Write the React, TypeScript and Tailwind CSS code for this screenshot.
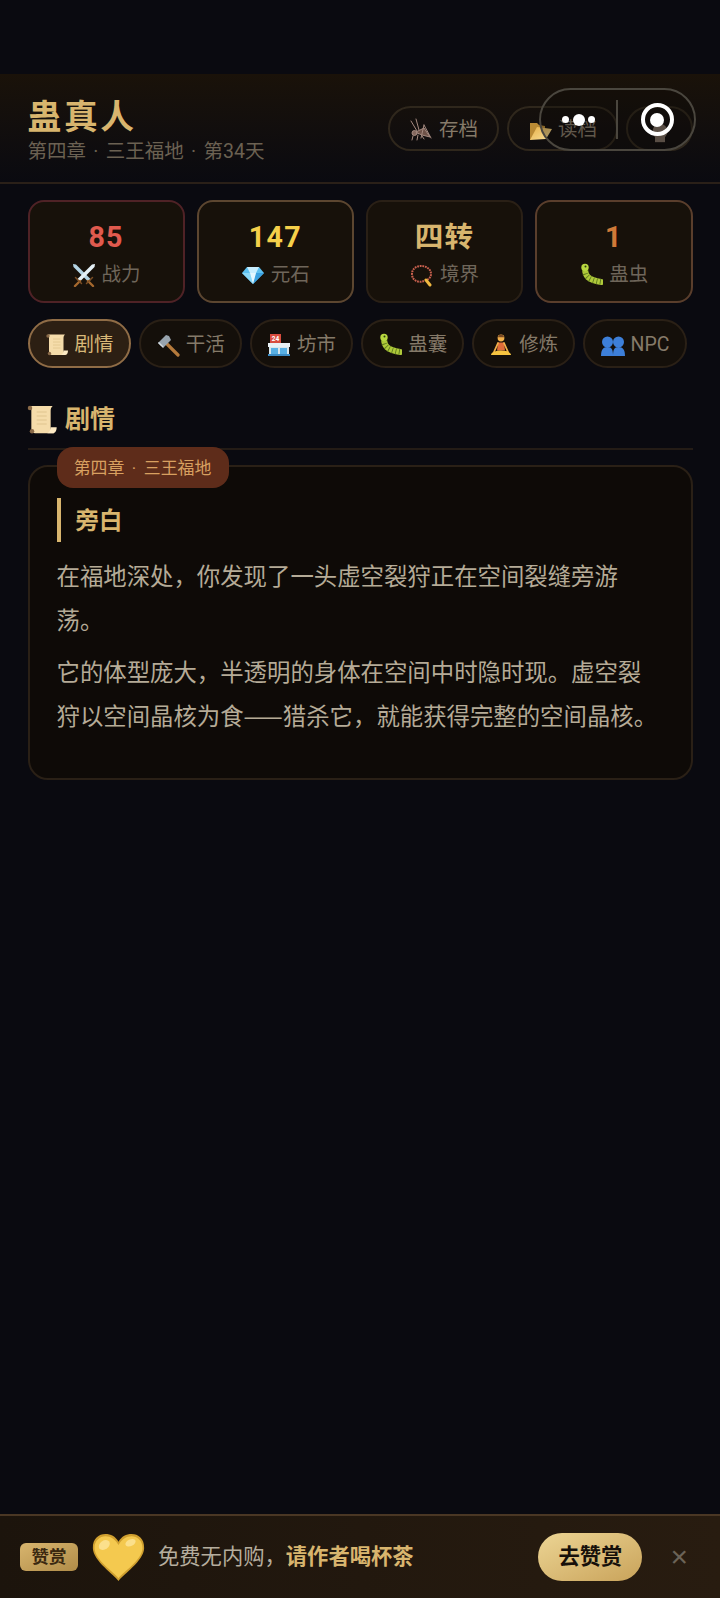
import type { ReactNode } from "react";

const FONT = "font-['Roboto','Noto_Sans_CJK_SC',sans-serif]";

const Swords = () => (
  <svg viewBox="0 0 24 24" className="h-6 w-6 shrink-0">
    <path d="M1 1l3 .5 15 15-2.500 2.500L1.500 4z" fill="#b4d4e4" />
    <path d="M23 1l-3 .5-15 15 2.500 2.500L22.500 4z" fill="#e4f0f6" />
    <path d="M16 18l5 5M8 18l-5 5" stroke="#a5682e" strokeWidth="2.400" strokeLinecap="round" />
    <path d="M14.500 20.500l6-6M9.500 20.500l-6-6" stroke="#7c4e24" strokeWidth="1.500" strokeLinecap="round" />
  </svg>
);

const Gem = () => (
  <svg viewBox="0 0 24 24" className="h-6 w-6 shrink-0">
    <path d="M6 4h12l5 6-11 11L1 10z" fill="#5cc0f0" />
    <path d="M6 4h12l-3 6H9z" fill="#c8eeff" />
    <path d="M1 10h8l3 11z" fill="#8ad8f8" />
    <path d="M23 10h-8l-3 11z" fill="#3aa0e0" />
    <path d="M9 10h6l-3 11z" fill="#e4f7ff" />
  </svg>
);

const Beads = () => (
  <svg viewBox="0 0 24 24" className="h-6 w-6 shrink-0" fill="none">
    <path d="M14 18c-5 2-12 0-12-7 0-5 4-8 9-8s10 3 10 8c0 3-2 5-4 6" stroke="#c8604e" strokeWidth="2" strokeDasharray="1.800 0.800" />
    <path d="M16 17l4 5" stroke="#f0b840" strokeWidth="3" strokeLinecap="round" />
  </svg>
);

const Worm = () => (
  <svg viewBox="0 0 24 24" className="h-6 w-6 shrink-0" fill="none">
    <path d="M6 5c0 8 3 12 16 14" stroke="#afc93a" strokeWidth="6" strokeLinecap="round" />
    <path d="M6 7c0 6 3 10 16 12" stroke="#5f7a1e" strokeWidth="6" strokeDasharray="0.900 2.600" />
    <circle cx="6" cy="4.500" r="3.700" fill="#b8d840" />
    <circle cx="6.500" cy="3.600" r="1" fill="#2c3a10" />
  </svg>
);

const Scroll = ({ size = "h-6 w-6" }: { size?: string }) => (
  <svg viewBox="0 0 24 24" className={`${size} shrink-0`}>
    <path d="M3 1.500h17c-1 1-1.500 2-1.500 3.500v13c0 2 1 3.500 2.500 4H7c-2 0-3-1.500-3-3.500V5C4 3.500 4 2.500 3 1.500z" fill="#f5dcaa" />
    <path d="M8 6h7.500M8 9h7.500M8 12h7.500M8 15h7.500" stroke="#e0c48e" strokeWidth="0.800" />
    <circle cx="3" cy="3" r="1.700" fill="#8a6a48" />
    <circle cx="4.500" cy="20.500" r="1.700" fill="#8a6a48" />
    <path d="M18.500 17.500H23c0 2.500-1 4.500-3 4.500h-4c1.500-1 2.500-2 2.500-4.500z" fill="#fdeac4" />
  </svg>
);

const Hammer = () => (
  <svg viewBox="0 0 24 24" className="h-6 w-6 shrink-0">
    <path d="M10 10l12 12" stroke="#b57a3c" strokeWidth="3.200" strokeLinecap="round" />
    <path d="M2 10l8-8 3 1 2 4-7 7-3-1z" fill="#98a4ae" />
    <path d="M2 10l5 5 1-1-5-5z" fill="#d2dae0" />
  </svg>
);

const Store = () => (
  <svg viewBox="0 0 24 24" className="h-6 w-6 shrink-0">
    <rect x="3" y="1" width="11" height="9" fill="#d84c3e" />
    <text x="8.500" y="8" fontSize="6.500" fontWeight="700" textAnchor="middle" fill="#fff" fontFamily="Roboto">24</text>
    <rect x="1" y="10" width="22" height="4" fill="#e8f0f4" />
    <rect x="2" y="14" width="20" height="8" fill="#d8e6ec" />
    <rect x="4" y="15" width="7" height="6" fill="#58b0e4" />
    <rect x="13" y="15" width="7" height="6" fill="#58b0e4" />
    <rect x="1" y="21" width="22" height="2" fill="#3c8cc4" />
  </svg>
);

const Meditate = () => (
  <svg viewBox="0 0 24 24" className="h-6 w-6 shrink-0">
    <circle cx="12" cy="5" r="3.400" fill="#f2b04a" />
    <path d="M12 1.600a3.400 3.400 0 0 1 3.300 2.600H8.700A3.400 3.400 0 0 1 12 1.600z" fill="#7a4a24" />
    <path d="M9 9.500h6l1 8H8z" fill="#e06c3a" />
    <path d="M9 10L5 19M15 10l4 9" stroke="#f2b04a" strokeWidth="1.800" strokeLinecap="round" />
    <path d="M2 22c0-3 5-4.500 10-4.500S22 19 22 22z" fill="#f6c440" />
  </svg>
);

const People = () => (
  <svg viewBox="0 0 24 24" className="h-6 w-6 shrink-0" fill="#3d7fd9">
    <circle cx="6.500" cy="9" r="5.500" />
    <circle cx="17.500" cy="9" r="5.500" />
    <path d="M0 23c0-6 2-9 6.500-9s5.500 3 5.500 9z" />
    <path d="M12 23c0-6 1-9 5.500-9s6.500 3 6.500 9z" />
  </svg>
);

const Cricket = () => (
  <svg viewBox="0 0 24 24" className="h-6 w-6 shrink-0" fill="none" stroke="#a58a80" strokeWidth="1" strokeLinecap="round">
    <path d="M2 3l6 10M7 1l3 11" />
    <path d="M7 14l8-4 6 9-8-2z" fill="#6e5248" />
    <circle cx="5.500" cy="15" r="2.500" fill="#84685e" />
    <path d="M15 7l7 13M15 7l-3 13M4 18l-1 4M9 17l-1 5M13 18l2 3" />
  </svg>
);

const Folder = () => (
  <svg viewBox="0 0 24 24" className="h-6 w-6 shrink-0">
    <defs>
      <linearGradient id="folderFill" x1="0" y1="0" x2="1" y2="1">
        <stop offset="0" stopColor="#e8b24a" />
        <stop offset="1" stopColor="#f8e09a" />
      </linearGradient>
    </defs>
    <path d="M2 5h7l2 2 6 1v5H8L3 22H2z" fill="#b98a34" />
    <path d="M9 9l15 2-6 10-16 1z" fill="url(#folderFill)" />
  </svg>
);

const Heart = () => (
  <svg viewBox="0 0 48 44" className="h-12 w-[53px] shrink-0">
    <path d="M24 44C20 38 1 26 0.500 14 0.200 5 6 1 12 1c5 0 9 2 12 7 3-5 7-7 12-7 6 0 11.800 4 11.500 13C47 26 28 38 24 44z" fill="#cf9f2f" />
    <path d="M24 41.500C20 36 2.500 25 2 14 1.800 7 7 3 12 3c5 0 9 3 12 8 3-5 7-8 12-8 5 0 10.200 4 10 11-.5 11-18 22-22 27.500z" fill="#f4c94f" />
    <ellipse cx="11" cy="11" rx="5.500" ry="4" transform="rotate(-35 11 11)" fill="#fbe08c" />
    <ellipse cx="35" cy="9" rx="5" ry="3" transform="rotate(-25 35 9)" fill="#fbe08c" />
  </svg>
);

function HeaderButton({ icon, label }: { icon: ReactNode; label?: string }) {
  return (
    <div className={`flex h-[45px] items-center justify-center gap-1.5 rounded-full border-2 border-[#2f271c] pt-1 ${label ? "w-[111px]" : "w-[67px]"}`}>
      {icon}
      {label && <span className="text-[19.500px] text-[#857a69]">{label}</span>}
    </div>
  );
}

function Stat({ value, label, icon, valueClass, borderClass }: { value: string; label: string; icon: ReactNode; valueClass: string; borderClass: string }) {
  return (
    <div className={`flex h-[103px] flex-col items-center rounded-2xl border-2 bg-[#17110a] pt-[16px] ${borderClass}`}>
      <div className={`text-[28.600px] leading-[38px] font-bold tracking-[1.300px] ${valueClass}`}>{value}</div>
      <div className="mt-[5px] flex items-center gap-1.5 text-[19.500px] leading-7 text-[#6f665a]">
        {icon}
        <span>{label}</span>
      </div>
    </div>
  );
}

function Tab({ icon, label, active }: { icon: ReactNode; label: string; active?: boolean }) {
  return (
    <div
      className={`flex h-[49px] w-[103.200px] shrink-0 items-center justify-center gap-1.5 rounded-full border-2 pt-0.5 text-[19.500px] ${
        active ? "border-[#8f6c46] bg-[#2c1f13] text-[#d8b878]" : "border-[#2a2016] bg-[#140f0a] text-[#857a69]"
      }`}
    >
      {icon}
      <span>{label}</span>
    </div>
  );
}

export default function App() {
  return (
    <div className={`relative flex h-[1598px] w-[720px] flex-col overflow-hidden bg-[#0a0a10] ${FONT}`}>
      <div className="h-[74px] shrink-0" />

      {/* header */}
      <div className="flex h-[110px] shrink-0 items-center justify-between border-b-2 border-[#2a2018] bg-gradient-to-b from-[#1a1209] to-[#0a0a10] pl-[27.500px] pr-[27px]">
        <div className="pt-[6px]">
          <h1 className="text-[33.800px] leading-[42px] font-bold tracking-[2.600px] text-[#d8b56e]">蛊真人</h1>
          <p className="text-[19.500px] leading-[26px] text-[#6b6152] [word-spacing:2.500px]">第四章 · 三王福地 · 第34天</p>
        </div>
        <div className="flex gap-2">
          <HeaderButton icon={<Cricket />} label="存档" />
          <HeaderButton icon={<Folder />} label="读档" />
          <HeaderButton
            icon={
              <svg viewBox="0 0 24 24" className="mt-[5px] h-5 w-5" fill="#7a6c60">
                <circle cx="12" cy="10" r="9" />
                <rect x="6" y="16" width="12" height="7" />
              </svg>
            }
          />
        </div>
      </div>

      {/* stats */}
      <div className="mx-[27.500px] mt-4 grid grid-cols-4 gap-3">
        <Stat value="85" label="战力" icon={<Swords />} valueClass="text-[#e05a4e]" borderClass="border-[#4f2226]" />
        <Stat value="147" label="元石" icon={<Gem />} valueClass="text-[#f5d04a]" borderClass="border-[#5c4630]" />
        <Stat value="四转" label="境界" icon={<Beads />} valueClass="text-[#d8b56e]" borderClass="border-[#2a2016]" />
        <Stat value="1" label="蛊虫" icon={<Worm />} valueClass="text-[#d07a38]" borderClass="border-[#5a3e2c]" />
      </div>

      {/* tabs */}
      <div className="ml-[27.500px] mt-4 flex gap-2">
        <Tab icon={<Scroll />} label="剧情" active />
        <Tab icon={<Hammer />} label="干活" />
        <Tab icon={<Store />} label="坊市" />
        <Tab icon={<Worm />} label="蛊囊" />
        <Tab icon={<Meditate />} label="修炼" />
        <Tab icon={<People />} label="NPC" />
      </div>

      {/* section title */}
      <div className="mx-[27.500px] mt-[31px] flex h-[51px] items-start gap-[7.500px] border-b-2 border-[#241c16] text-[25px] leading-[42px] font-bold text-[#d8b56e]">
        <Scroll size="h-8 w-8 mt-[5px] -ml-[2px]" />
        <span>剧情</span>
      </div>

      {/* story card */}
      <div className="relative mx-[27.500px] mt-[15px] h-[315px] rounded-[20px] border-2 border-[#2a2016] bg-[#0e0a07] px-[27px] pt-[31px]">
        <div className="absolute top-[-20px] left-[27px] flex h-[41px] w-[172px] items-center justify-center rounded-2xl bg-[#5e2c1a] pt-0.5 text-[16.900px] text-[#d8a060] [word-spacing:3.300px]">
          第四章 · 三王福地
        </div>
        <div className="flex h-11 items-center border-l-4 border-[#d8b56e] pl-[15px] pt-1 text-[23.400px] font-bold text-[#d8b56e]">旁白</div>
        <p className="mt-[11px] font-['Noto_Sans_CJK_SC',sans-serif] text-[23.400px] leading-[44px] text-[#b5ab97]">在福地深处，你发现了一头虚空裂狩正在空间裂缝旁游荡。</p>
        <p className="mt-2 font-['Noto_Sans_CJK_SC',sans-serif] text-[23.400px] leading-[44px] text-[#b5ab97]">它的体型庞大，半透明的身体在空间中时隐时现。虚空裂狩以空间晶核为食——猎杀它，就能获得完整的空间晶核。</p>
      </div>

      {/* reward banner */}
      <div className="mt-auto flex h-[84px] shrink-0 items-center border-t-2 border-[#4a3724] bg-gradient-to-r from-[#1c140c] to-[#281c10] pl-5 pr-8">
        <div className="flex h-7 w-[58px] items-center justify-center rounded-md bg-gradient-to-br from-[#d8b56e] to-[#b08c48] text-[17.500px] font-bold text-[#3a2810]">赞赏</div>
        <div className="ml-[14px]"><Heart /></div>
        <div className="ml-[13px] flex-1 text-[21.300px] text-[#b5ad9e]">
          免费无内购，<b className="font-bold text-[#d8b56e]">请作者喝杯茶</b>
        </div>
        <div className="flex h-12 w-[104px] items-center justify-center rounded-full bg-gradient-to-br from-[#ecd594] to-[#c9a35a] text-[21.300px] font-bold text-[#16100a]">去赞赏</div>
        <div className="ml-7 text-[30px] leading-none text-[#6b6357] font-['Liberation_Sans',sans-serif]">×</div>
      </div>

      {/* mini-program capsule */}
      <div className="absolute top-[88px] left-[539px] flex h-[63px] w-[157px] items-center rounded-full border-2 border-[#4a463e] bg-[#0c0a08]/30">
        <div className="flex w-[75px] items-center justify-center gap-[3.500px]">
          <span className="h-[7px] w-[7px] rounded-full bg-white" />
          <span className="h-3 w-3 rounded-full bg-white" />
          <span className="h-[7px] w-[7px] rounded-full bg-white" />
        </div>
        <div className="h-[39px] w-0.5 bg-[#4a463e]" />
        <div className="flex flex-1 items-center justify-center pl-0.5">
          <div className="flex h-[33px] w-[33px] items-center justify-center rounded-full border-4 border-white">
            <span className="h-[14px] w-[14px] rounded-full bg-white" />
          </div>
        </div>
      </div>
    </div>
  );
}
